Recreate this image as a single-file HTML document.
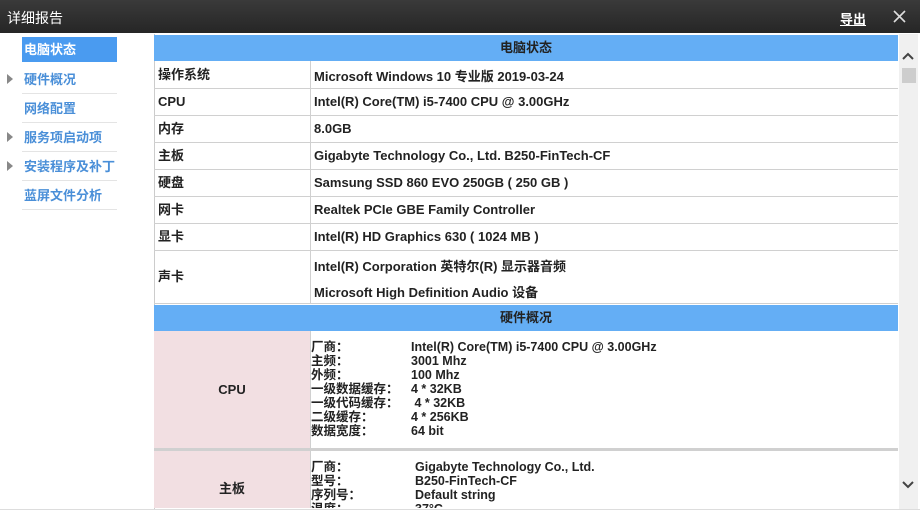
<!DOCTYPE html><html><head><meta charset="utf-8"><style>
body{margin:0;width:920px;height:520px;overflow:hidden;background:#fff;font-family:"Liberation Sans","Noto Sans CJK SC",sans-serif;font-weight:bold;color:#222;position:relative}
.tb{position:absolute;left:0;top:0;width:920px;height:33px;background:linear-gradient(#3a3a3a,#262626)}
.tb .t{position:absolute;left:7px;top:8px;color:#fff;font-size:14px;font-weight:normal}
.tb .e{position:absolute;left:840px;top:9px;color:#fff;font-size:13px;text-decoration:underline}
.side div{position:absolute;left:22px;width:95px;height:28px;line-height:28px;font-size:13px;color:#4a8fd8;border-bottom:1px solid #e4e4e4;padding-left:2px;box-sizing:border-box}
.side .a{background:#4a9bf0;color:#fff;border:none}
.arr{position:absolute;left:7px;width:0;height:0;border-left:6px solid #888;border-top:5px solid transparent;border-bottom:5px solid transparent}
.hd{position:absolute;left:154px;width:744px;height:26px;background:#64aef5;text-align:center;line-height:26px;font-size:13px}
.r{position:absolute;left:154px;width:744px;border-bottom:1px solid #d0d0d0;box-sizing:border-box}
.l{position:absolute;left:0;top:0;bottom:0;width:157px;box-sizing:border-box;border-right:1px solid #d0d0d0;padding-left:4px;font-size:13px}
.v{position:absolute;left:160px;font-size:13px}
.pk{background:#f2dfe2}
.kv{position:absolute;font-size:12.5px;line-height:14px}
</style></head><body>
<div class="tb"><span class="t">详细报告</span><span class="e">导出</span>
<svg style="position:absolute;left:893px;top:10px" width="13" height="13"><path d="M1 1L12 12M12 1L1 12" stroke="#ddd" stroke-width="1.6"/></svg></div>
<div class="side">
<div class="a" style="top:37px;height:25px;line-height:25px">电脑状态</div>
<div style="top:66px">硬件概况</div><div style="top:95px">网络配置</div><div style="top:124px">服务项启动项</div><div style="top:153px">安装程序及补丁</div><div style="top:182px">蓝屏文件分析</div>
</div>
<div class="arr" style="top:74px"></div><div class="arr" style="top:132px"></div><div class="arr" style="top:161px"></div>
<div style="position:absolute;left:154px;top:34px;width:745px;height:475px;border-left:1px solid #ccc;border-bottom:1px solid #ccc"></div>
<div class="hd" style="top:35px">电脑状态</div>
<div class="r" style="top:61px;height:28px"><div class="l" style="line-height:27px">操作系统</div><div class="v" style="top:5px">Microsoft Windows 10 专业版 2019-03-24</div></div>
<div class="r" style="top:89px;height:27px"><div class="l" style="line-height:26px">CPU</div><div class="v" style="top:5px">Intel(R) Core(TM) i5-7400 CPU @ 3.00GHz</div></div>
<div class="r" style="top:116px;height:27px"><div class="l" style="line-height:26px">内存</div><div class="v" style="top:5px">8.0GB</div></div>
<div class="r" style="top:143px;height:27px"><div class="l" style="line-height:26px">主板</div><div class="v" style="top:5px">Gigabyte Technology Co., Ltd. B250-FinTech-CF</div></div>
<div class="r" style="top:170px;height:27px"><div class="l" style="line-height:26px">硬盘</div><div class="v" style="top:5px">Samsung SSD 860 EVO 250GB ( 250 GB )</div></div>
<div class="r" style="top:197px;height:27px"><div class="l" style="line-height:26px">网卡</div><div class="v" style="top:5px">Realtek PCIe GBE Family Controller</div></div>
<div class="r" style="top:224px;height:27px"><div class="l" style="line-height:26px">显卡</div><div class="v" style="top:5px">Intel(R) HD Graphics 630 ( 1024 MB )</div></div>
<div class="r" style="top:251px;height:53px"><div class="l" style="line-height:52px">声卡</div><div class="v" style="top:5px">Intel(R) Corporation 英特尔(R) 显示器音频</div><div class="v" style="top:31px">Microsoft High Definition Audio 设备</div></div>
<div class="hd" style="top:305px">硬件概况</div>
<div class="r" style="top:331px;height:120px;border-bottom:3px solid #d0d0d0"><div class="l pk" style="line-height:117px;text-align:center;padding:0">CPU</div>
<div class="kv" style="left:157px;top:9px">厂商：<br>主频：<br>外频：<br>一级数据缓存：<br>一级代码缓存：<br>二级缓存：<br>数据宽度：</div>
<div class="kv" style="left:257px;top:9px">Intel(R) Core(TM) i5-7400 CPU @ 3.00GHz<br>3001 Mhz<br>100 Mhz<br>4 * 32KB<br>&nbsp;4 * 32KB<br>4 * 256KB<br>64 bit</div></div>
<div class="r" style="top:451px;height:57px;border:none;overflow:hidden"><div class="l pk" style="line-height:76px;text-align:center;padding:0">主板</div>
<div class="kv" style="left:157px;top:9px">厂商：<br>型号：<br>序列号：<br>温度：</div>
<div class="kv" style="left:261px;top:9px">Gigabyte Technology Co., Ltd.<br>B250-FinTech-CF<br>Default string<br>37°C</div></div>
<div style="position:absolute;left:899px;top:34px;width:19px;height:475px;background:#f0f0f0"></div>
<svg style="position:absolute;left:902px;top:52px" width="12" height="8"><path d="M1 7L6 2L11 7" stroke="#444" stroke-width="2" fill="none"/></svg>
<div style="position:absolute;left:902px;top:68px;width:14px;height:15px;background:#cdcdcd"></div>
<svg style="position:absolute;left:902px;top:481px" width="12" height="8"><path d="M1 1L6 6L11 1" stroke="#444" stroke-width="2" fill="none"/></svg>
<div style="position:absolute;left:0;top:509px;width:920px;height:11px;background:#fff;border-top:1px solid #ddd"></div>
</body></html>
